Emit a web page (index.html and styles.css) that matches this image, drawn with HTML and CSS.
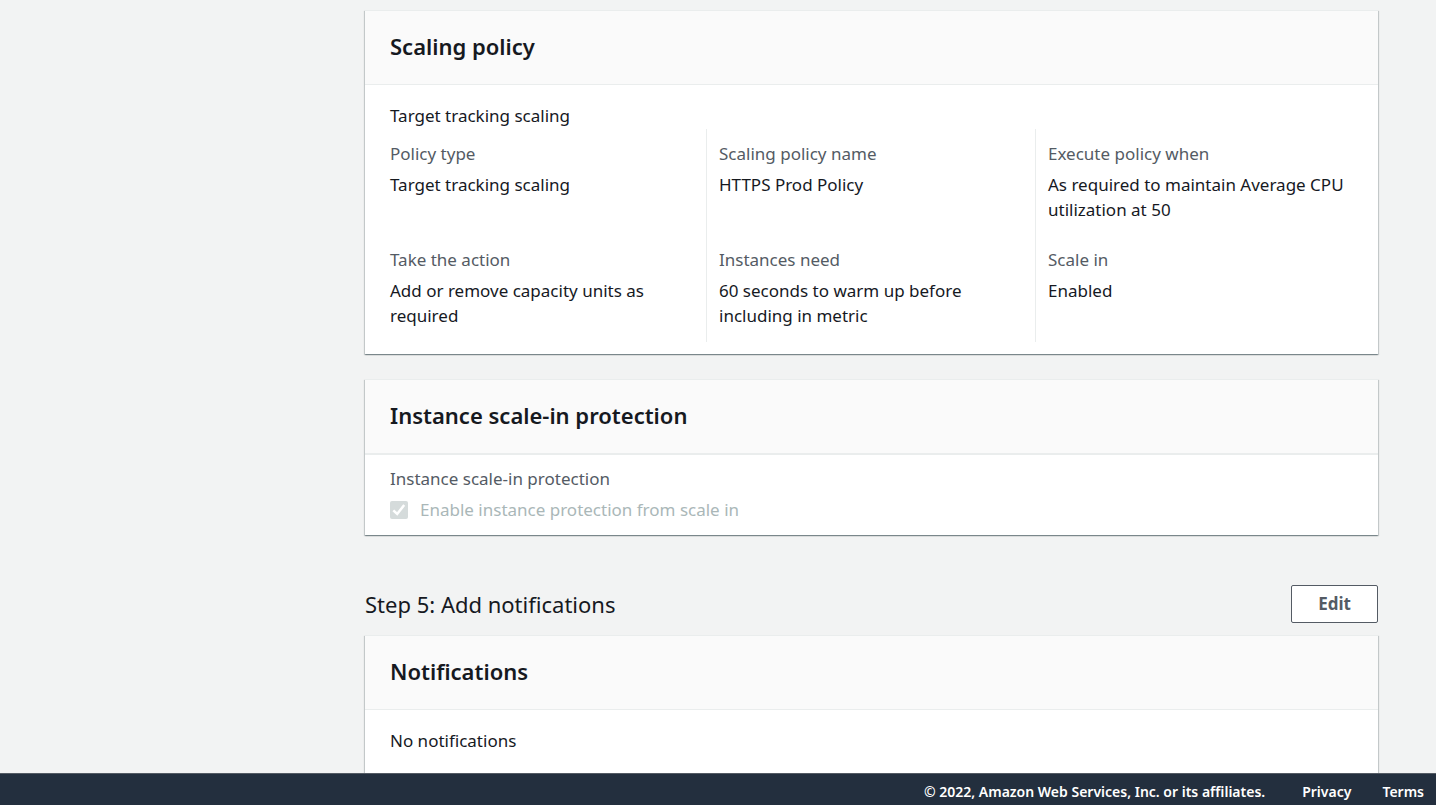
FILE: index.html
```html
<!DOCTYPE html>
<html lang="en">
<head>
<meta charset="utf-8">
<title>Create Auto Scaling group</title>
<link rel="stylesheet" href="styles.css">
</head>
<body>
<main class="content">
  <section class="card">
    <header class="card-header"><h2 class="card-title">Scaling policy</h2></header>
    <div class="card-body policy">
      <p class="policy-heading">Target tracking scaling</p>
      <div class="columns">
        <dl class="column">
          <div class="pair"><dt>Policy type</dt><dd>Target tracking scaling</dd></div>
          <div class="pair"><dt>Take the action</dt><dd>Add or remove capacity units as required</dd></div>
        </dl>
        <dl class="column">
          <div class="pair"><dt>Scaling policy name</dt><dd>HTTPS Prod Policy</dd></div>
          <div class="pair"><dt>Instances need</dt><dd>60 seconds to warm up before including in metric</dd></div>
        </dl>
        <dl class="column">
          <div class="pair"><dt>Execute policy when</dt><dd>As required to maintain Average CPU utilization at 50</dd></div>
          <div class="pair"><dt>Scale in</dt><dd>Enabled</dd></div>
        </dl>
      </div>
    </div>
  </section>

  <section class="card">
    <header class="card-header strong"><h2 class="card-title">Instance scale-in protection</h2></header>
    <div class="card-body protection">
      <p class="label">Instance scale-in protection</p>
      <label class="check" for="protect">
        <span class="check-mark">
          <input class="check-input" id="protect" type="checkbox" checked disabled>
          <svg class="check-icon" viewBox="0 0 18 18" aria-hidden="true"><path d="M3.300 9.300 7.200 13l7-9"/></svg>
        </span>
        Enable instance protection from scale in
      </label>
    </div>
  </section>

  <div class="step">
    <h1 class="step-title">Step 5: Add notifications</h1>
    <button class="button" type="button">Edit</button>
  </div>

  <section class="card">
    <header class="card-header"><h2 class="card-title">Notifications</h2></header>
    <div class="card-body notifications"><p>No notifications</p></div>
  </section>
</main>
<footer class="footer">
  <span class="copyright">© 2022, Amazon Web Services, Inc. or its affiliates.</span>
  <a class="footer-link" href="#privacy">Privacy</a>
  <a class="footer-link" href="#terms">Terms</a>
</footer>
</body>
</html>
```
FILE: styles.css
```css
* { box-sizing: border-box; }

body {
  display: flex;
  flex-direction: column;
  height: 100vh;
  margin: 0;
  overflow: hidden;
  background: #f2f3f3;
  color: #16191f;
  font: 17px/25px "Noto Sans", "Open Sans", sans-serif;
}

h1, h2, p, dl, dd { margin: 0; }

.content {
  flex: 1;
  min-height: 0;
  overflow: hidden;
  padding: 10px 58px 0 365px;
}

.card {
  margin-bottom: 25px;
  background: #fff;
  border-top: 1px solid #eaeded;
  box-shadow: 0 1px 1px 0 rgba(0, 28, 36, 0.3), 1px 1px 1px 0 rgba(0, 28, 36, 0.15), -1px 1px 1px 0 rgba(0, 28, 36, 0.15);
}

.card-header {
  padding: 19px 25px 22px;
  background: #fafafa;
  border-bottom: 1px solid #eaeded;
}

.card-header.strong { border-bottom-width: 2px; }

.card-title {
  font-size: 22px;
  line-height: 32px;
  font-weight: 600;
}

.policy { padding: 18px 13px 12px; }
.policy-heading { padding: 0 12px 1px; }

.columns {
  display: grid;
  grid-template-columns: repeat(3, 1fr);
}

.column {
  display: flex;
  flex-direction: column;
  gap: 25px;
  padding: 12px 12px 14px;
  border-right: 1px solid #eaeded;
}

.column:last-child { border-right: 0; }

.pair { min-height: 81px; }

.label, dt {
  margin-bottom: 6px;
  color: #545b64;
}

.protection { padding: 11px 25px 13px; }

.check {
  display: flex;
  align-items: center;
  gap: 12px;
  color: #aab7b8;
}

.check-mark {
  display: grid;
  width: 18px;
  height: 18px;
}

.check-input, .check-icon { grid-area: 1 / 1; }

.check-input {
  appearance: none;
  width: 18px;
  height: 18px;
  margin: 0;
  border-radius: 2px;
  background: #d5dbdb;
}

.check-icon {
  z-index: 1;
  fill: none;
  stroke: #fff;
  stroke-width: 2.5;
}

.step {
  display: flex;
  align-items: center;
  justify-content: space-between;
  margin: 50px 0 12px;
}

.step-title {
  font-size: 22px;
  line-height: 32px;
  font-weight: 400;
}

.button {
  padding: 5px 26px;
  border: 1px solid #545b64;
  border-radius: 2px;
  background: #fff;
  color: #545b64;
  font: 700 17px/26px "Noto Sans", "Open Sans", sans-serif;
}

.notifications { padding: 18px 25px 25px; }

.footer {
  display: flex;
  justify-content: flex-end;
  align-items: center;
  height: 32px;
  padding: 4px 12px 0 0;
  border-top: 1px solid #545b64;
  background: #232f3e;
  color: #fff;
  font-size: 14px;
  font-weight: 600;
  line-height: 20px;
}

.copyright { margin-right: 6px; }

.footer-link {
  margin-left: 31px;
  color: #fff;
  text-decoration: none;
}
```
